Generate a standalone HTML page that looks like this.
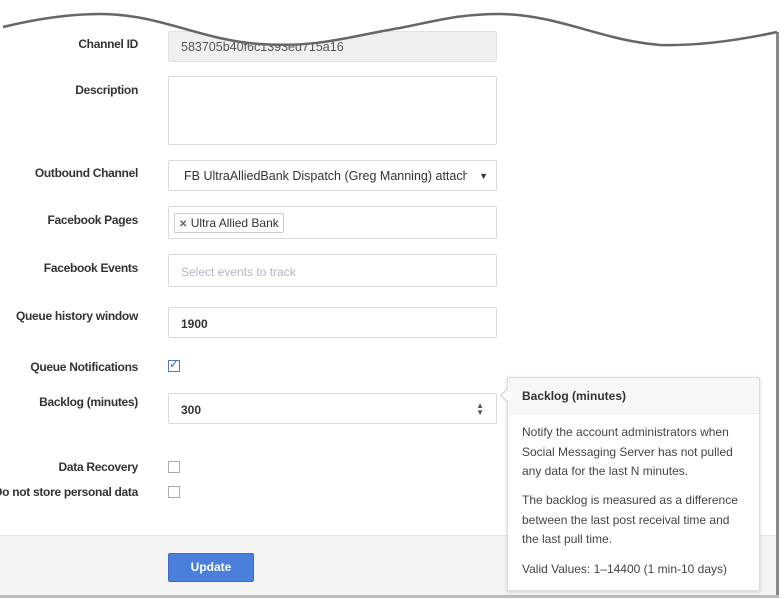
<!DOCTYPE html>
<html><head><style>
body{margin:0;width:784px;height:599px;background:#fff;position:relative;overflow:hidden;font-family:"Liberation Sans",sans-serif;}
.l{position:absolute;right:646px;font-size:12px;font-weight:bold;color:#333;white-space:nowrap;letter-spacing:-0.3px}
.i{position:absolute;left:168px;width:329px;border:1px solid #d6dbe0;border-radius:2px;background:#fff;box-sizing:border-box;font-size:12.5px;color:#333;white-space:nowrap;overflow:hidden}
.cb{position:absolute;left:168px;width:10px;height:10px;border:1px solid #aab;background:#fff}
.t{position:absolute;left:522px;font-size:12px;color:#444;line-height:19.5px}
</style></head><body>
<div style="position:absolute;left:0;top:535px;width:777px;height:60px;background:#f4f4f4;border-top:1px solid #e4e4e4"></div>
<div style="position:absolute;left:776px;top:32px;width:3px;height:565px;background:#888"></div>
<div style="position:absolute;left:0;top:595px;width:779px;height:3px;background:#bbb"></div>
<div class="l" style="top:37px">Channel ID</div>
<div class="i" style="top:31px;height:31px;background:#efefef;border-color:#e2e2e2;padding:8px 12px;color:#555">583705b40f6c1393ed715a16</div>
<svg style="position:absolute;left:0;top:0" width="784" height="60"><path d="M0 0H784V32L775 32C740 40 700 46 660 45C600 40 560 15 500 14C460 14 440 20 400 28C350 36 320 48 260 44C200 40 160 14 100 14C70 14 40 18 0 28Z" fill="#fff"/><path d="M3 27C40 18 70 14 100 14C160 14 200 40 260 44C320 48 350 36 400 28C440 20 460 14 500 14C560 15 600 40 660 45C700 46 740 40 777 32" fill="none" stroke="#666" stroke-width="2.5"/></svg>
<div class="l" style="top:83px">Description</div>
<div class="i" style="top:76px;height:69px"></div>
<div class="l" style="top:166px">Outbound Channel</div>
<div class="i" style="top:160px;height:31px;padding:8px 15px"><span style="display:inline-block;width:283px;overflow:hidden">FB UltraAlliedBank Dispatch (Greg Manning) attached</span><span style="position:absolute;right:8px;font-size:9px;top:10px">▼</span></div>
<div class="l" style="top:213px">Facebook Pages</div>
<div class="i" style="top:206px;height:33px"><span style="position:absolute;left:5px;top:6px;border:1px solid #ccc;border-radius:2px;padding:2px 4px;font-size:12px"><b style="color:#666;font-size:10px">✕</b> Ultra Allied Bank</span></div>
<div class="l" style="top:261px">Facebook Events</div>
<div class="i" style="top:254px;height:33px;padding:10px 12px;color:#b0b8c4;font-size:12px">Select events to track</div>
<div class="l" style="top:309px">Queue history window</div>
<div class="i" style="top:307px;height:31px;padding:9px 12px;font-weight:bold;font-size:12px">1900</div>
<div class="l" style="top:360px">Queue Notifications</div>
<div class="cb" style="top:360px;border-color:#5577bb"><span style="position:absolute;left:0;top:-4px;font-size:12px;color:#3366cc">✓</span></div>
<div class="l" style="top:395px">Backlog (minutes)</div>
<div class="i" style="top:393px;height:31px;padding:9px 12px;font-weight:bold;font-size:12px">300<span style="position:absolute;right:12px;top:8px;font-size:8px;line-height:7px;color:#555">▲<br>▼</span></div>
<div class="l" style="top:460px">Data Recovery</div>
<div class="cb" style="top:461px"></div>
<div class="l" style="top:485px">Do not store personal data</div>
<div class="cb" style="top:486px"></div>
<div style="position:absolute;left:168px;top:553px;width:86px;height:29px;background:#4a7fdc;border:1px solid #3a6cc6;border-radius:2px;box-sizing:border-box;color:#fff;font-weight:bold;font-size:12px;text-align:center;line-height:27px">Update</div>
<div style="position:absolute;left:507px;top:377px;width:251px;height:212px;border:1px solid #ddd;background:#fff;box-shadow:0 1px 4px rgba(0,0,0,.15)">
<div style="height:35px;background:#f7f7f7;border-bottom:1px solid #eee"></div></div>
<div style="position:absolute;left:502px;top:391px;width:8px;height:8px;background:#fff;border-left:1px solid #ccc;border-bottom:1px solid #ccc;transform:rotate(45deg)"></div>
<div class="t" style="top:387px;font-weight:bold;color:#333">Backlog (minutes)</div>
<div class="t" style="top:423px">Notify the account administrators when<br>Social Messaging Server has not pulled<br>any data for the last N minutes.</div>
<div class="t" style="top:491px">The backlog is measured as a difference<br>between the last post receival time and<br>the last pull time.</div>
<div class="t" style="top:560px">Valid Values: 1–14400 (1 min-10 days)</div>
</body></html>
